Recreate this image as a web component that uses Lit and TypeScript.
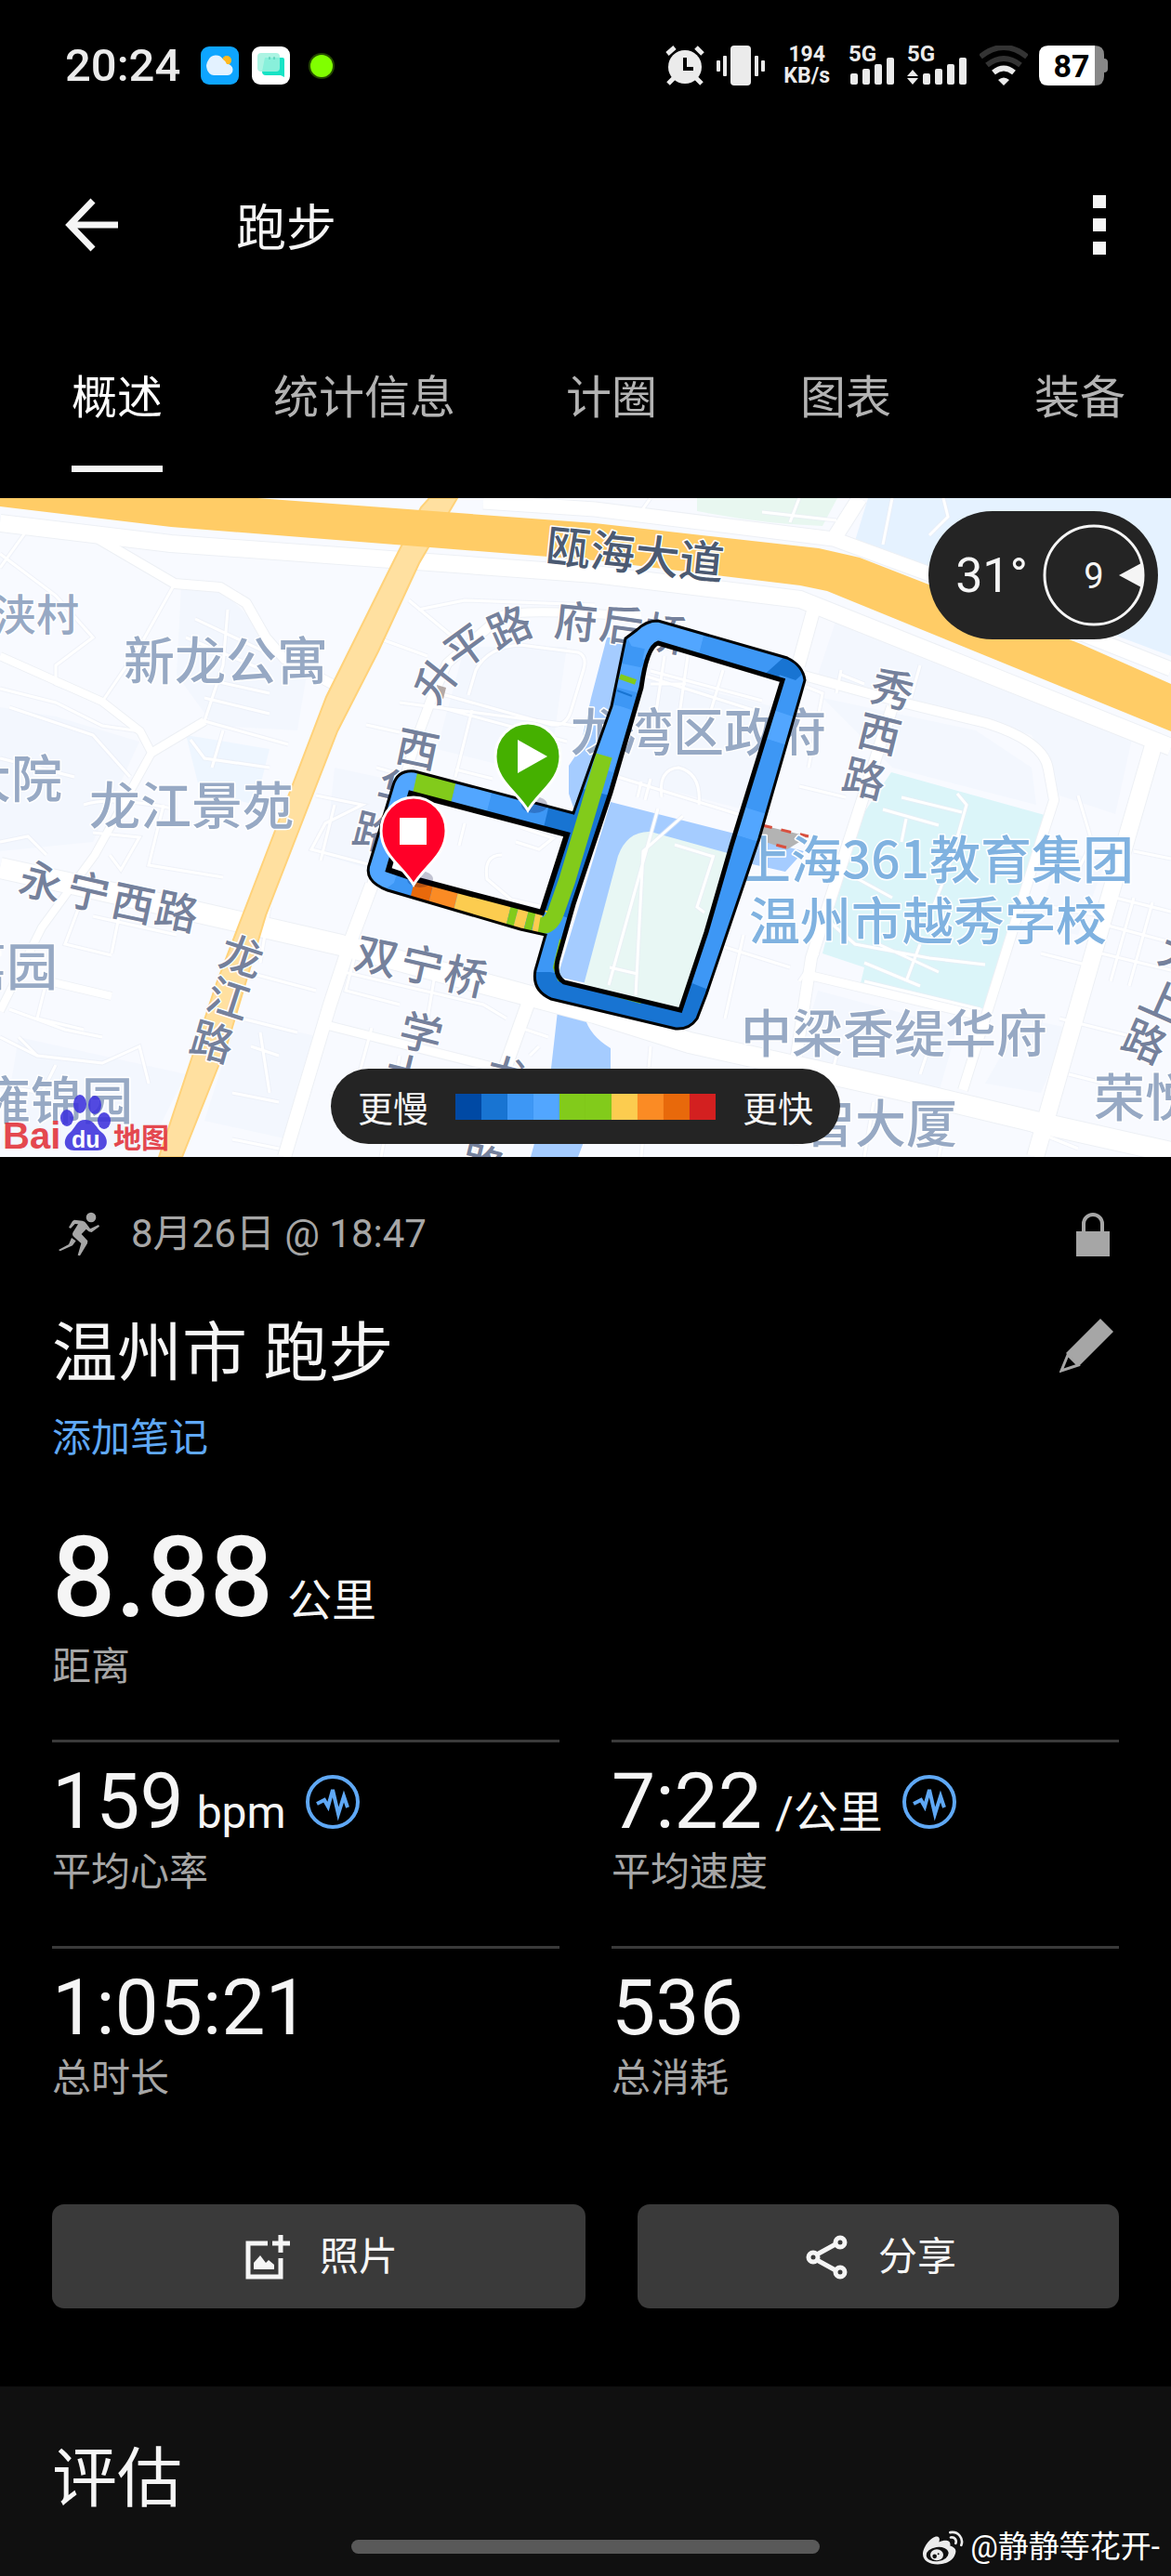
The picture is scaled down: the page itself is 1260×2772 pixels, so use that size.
import {LitElement, html, svg, css} from 'lit';
import {customElement, property, state} from 'lit/decorators.js';
import {classMap} from 'lit/directives/class-map.js';

const SLOWEST = '#0049a4';
const SLOW = '#1874d2';
const MID = '#3d97f5';
const LIGHT = '#52a6ff';
const GREEN = '#82cb1b';
const YELLOW = '#fccc4f';
const ORANGE = '#fb8b24';
const RED_ORANGE = '#e8690b';
const FASTEST = '#d32020';

const PACE_SCALE = [SLOWEST, SLOW, MID, LIGHT, GREEN, GREEN, YELLOW, ORANGE, RED_ORANGE, FASTEST];

// [path, width]
const ROADS: [string, number][] = [
    ['M0,27 L184,49 L640,82 L861,109 L1260,268', 18],
    ['M520,4 L640,12 L897,44 L1028,92 L1260,184', 15],
    ['M897,44 L925,0', 16],
    ['M106,44 L188,92 L237,96 L265,113 L286,150 L306,173 L359,201', 10],
    ['M0,552 L45,462 L102,384 L163,274 L151,251 L110,219 L0,170', 8],
    ['M163,274 L220,240', 9],
    ['M0,398 L82,416 L245,453 L367,481 L571,536 L640,554 L742,586 L971,637 L1126,674 L1260,704', 22],
    ['M400,416 L379,472 L355,545 L306,709', 14],
    ['M539,127 L481,178 L465,214 L448,260 L400,416', 10],
    ['M539,127 Q560,118 690,128', 9],
    ['M355,568 L530,612', 9],
    ['M571,536 L543,614 L518,709', 14],
    ['M876,118 L859,180', 14],
    ['M865,191 L967,219 L1061,242 Q1124,262 1128,292 L1134,325 L1118,375 L1036,637', 10],
    ['M1244,256 L1187,453 L1114,709', 18],
    ['M960,225 L873,495 L857,600', 12],
    ['M873,514 L1050,556', 9],
    ['M48,519 L120,536', 8],
];

const LANES = [
    'M0,60 L60,105 L100,150 L60,180 L60,200 L110,219',
    'M188,92 L150,160 L110,219', 'M28,36 L0,75',
    'M210,130 L282,164 M200,150 L276,182 M222,195 L290,210 M220,215 L290,232 M245,120 L240,180 L220,240',
    'M0,205 L60,220 L110,245 L151,251 M10,225 L100,255 L140,300 M0,280 L80,300',
    'M220,240 L310,265 M205,260 L220,280 L290,290 M240,250 L228,290',
    'M90,330 Q120,320 190,335 M100,360 L150,365 L130,400 L118,384 M176,330 L160,395 L240,408',
    'M340,320 L390,330 L350,350 L335,378 L400,395 M360,330 L345,390',
    'M0,370 L30,364 L50,384 M85,440 L70,480 L120,492 M100,450 L190,470 M130,440 L120,490',
    'M10,550 L70,572 L110,580 M50,520 L40,560 L90,572 M0,580 L40,600 L110,608 L150,590 L160,630',
    'M60,610 L45,640 L0,632 M40,600 L20,580',
    'M275,460 L330,470 M265,510 L340,530 M290,440 L280,500 M370,510 L520,545 L545,560',
    'M260,560 L320,575 M280,575 L290,640 M250,640 L300,650 M270,590 L300,600 M250,690 L300,700',
    'M385,480 L372,530 L430,545 M390,500 L410,490 M470,500 L460,560',
    'M440,110 L500,160 M450,120 L500,110 L640,115 M405,150 L460,170 M405,290 L440,300',
    'M504,212 L512,185 Q525,160 560,158 L622,166 Q632,170 628,184 L614,230 Q608,248 590,243 L465,208',
    'M430,220 L620,245 M462,222 L610,262 M508,228 L490,300 M394,244 L430,252',
    'M490,292 L530,302 M560,354 L595,366 L580,378 L555,370 M540,384 Q520,384 524,410 L550,432 L585,440 M500,350 L494,374',
    'M700,200 L738,200 M700,186 L820,218 M690,190 L810,228 M740,170 L730,240 M778,185 L760,245 M715,170 L706,230',
    'M665,300 L800,342 M712,322 Q708,292 730,290 Q755,296 752,330 M690,305 L686,322 M700,302 L694,325',
    'M708,334 L655,524 M735,342 L692,380 L684,535 M726,373 L768,386 M768,384 L750,440 L758,446 M656,505 L686,512',
    'M860,200 L885,210 L870,290 M905,185 L900,210 M930,200 L905,190 M860,310 L910,322 M990,180 L980,215',
    'M970,322 L1035,338 M950,335 L1010,352 M975,345 L970,370 M1030,318 L1040,330 L1020,400 L1000,450',
    'M905,400 L960,430 M880,445 L920,480 L1000,495 L1060,502 M930,500 L990,525 M945,480 L1010,510',
    'M930,520 L1055,550 M990,480 L975,520 M880,490 L860,520 M800,470 L780,560 M770,480 L850,505',
    'M1160,320 L1175,370 L1160,400 M1130,440 L1190,450 M1120,490 L1180,505 M1220,380 L1260,388',
    'M1200,430 L1260,445 M1192,460 L1260,478 M1185,490 L1260,508 M1220,430 L1195,520 M1240,435 L1215,525',
    'M1140,560 L1220,580 M1150,620 L1230,640 M1000,590 L990,620 M900,600 L890,640 M660,650 L860,695',
    'M940,650 L930,709 M1020,660 L1010,709 M1060,660 L1160,700 M700,590 L690,709 M1120,560 L1110,600',
    'M820,15 L900,24 M860,0 L850,26 M960,0 L950,50 M1000,40 L1020,20 L1015,0 M700,0 L690,14',
    'M355,640 L500,670 M400,570 L370,680 M430,600 L410,709 M560,570 L590,580 M570,600 L580,590',
];

const BLOCKS = [
    'M195,95 L240,100 L270,130 L330,190 L320,250 L230,245 L190,190 Z',
    'M0,225 L60,235 L150,262 L100,370 L0,380 Z',
    'M360,290 L430,305 L400,400 L350,385 Z',
    'M20,580 L200,620 L160,700 L0,700 Z',
    'M255,560 L345,580 L310,690 L220,670 Z',
    'M885,215 L1050,250 L1110,290 L1115,330 L960,290 Z',
    'M1140,380 L1190,390 L1160,470 L1115,460 Z',
    'M880,530 L1030,570 L1010,640 L860,600 Z',
    'M1100,560 L1150,570 L1120,640 L1060,630 Z',
    'M500,160 L610,160 L590,300 L470,270 Z',
    'M690,190 L835,225 L800,335 L665,300 Z',
    'M900,130 L1220,250 L1200,340 L1140,320 L1110,255 L880,190 Z',
];

// [text, x, y, colour]
const PLACES: [string, number, number, string][] = [
    ['新龙公寓', 133, 195, '#97a9c4'],
    ['龙江景苑', 96, 351, '#97a9c4'],
    ['大院', -43, 322, '#97a9c4'],
    ['嘉园', -48, 524, '#97a9c4'],
    ['雍锦园', -22, 668, '#97a9c4'],
    ['龙湾区政府', 614, 272, '#97a9c4'],
    ['上海361教育集团', 796, 409, '#80b2e0'],
    ['温州市越秀学校', 806, 475, '#80b2e0'],
    ['中梁香缇华府', 797, 596, '#97a9c4'],
    ['荣悦府', 1177, 665, '#97a9c4'],
    ['智大厦', 865, 693, '#97a9c4'],
];

// road names run along the road, one character at a time: [char, x, y, angle]
const STREETS: [string, number, number, number][] = [
    ['升', 467, 194, -52], ['平', 500, 157, -36], ['路', 547, 136, -24],
    ['府', 620, 130, 6], ['后', 669, 134, 8], ['桥', 716, 143, 10],
    ['西', 450, 267, 12], ['华', 430, 312, 14], ['路', 404, 357, 14],
    ['永', 45, 410, 14], ['宁', 96, 421, 13], ['西', 144, 433, 12], ['路', 191, 442, 12],
    ['龙', 261, 490, 18], ['江', 247, 536, 18], ['路', 229, 582, 16],
    ['双', 406, 490, 12], ['宁', 455, 500, 13], ['桥', 502, 512, 13],
    ['学', 454, 573, 14], ['士', 438, 618, 14], ['龙', 547, 620, 14], ['路', 520, 714, 14],
    ['秀', 961, 203, 14], ['西', 947, 251, 14], ['路', 931, 299, 14],
    ['大', 1272, 488, 22], ['上', 1252, 538, 24], ['路', 1233, 582, 24],
];

const OUTER = 'M673,151 L685,142 Q695,132 708,132 L847,172 Q864,180 866,196 L862,210 L817,366 L760,534 L750,560 Q742,572 727,571 L593,539 Q572,530 576,508 L587,470 L560,464 L417,422 Q390,412 398,392 L423,309 Q428,292 446,294 L617,339 L658,224 Z';
const INNER_SMALL = 'M442,318 L610,362 L583,446 L450,411 L418,400 Z';
const INNER_BIG = 'M708,156 L842,196 L787,374 L760,467 L732,551 L607,521 Q596,514 600,497 L617,437 L657,317 L690,204 Q696,160 708,156 Z';

// [path, colour, width]
const TRACK: [string, string, number][] = [
    ['M443,306 L488,317', GREEN, 34],
    ['M488,317 L527,326', LIGHT, 34],
    ['M527,326 L588,342', MID, 34],
    ['M588,342 L630,352', SLOW, 34],
    ['M448,300 Q430,296 426,315 L408,392 L424,414', LIGHT, 40],
    ['M424,414 L444,420', MID, 34],
    ['M444,420 L464,425', RED_ORANGE, 34],
    ['M464,425 L491,432', ORANGE, 34],
    ['M491,432 L548,446', YELLOW, 34],
    ['M548,446 L556,448', GREEN, 34],
    ['M556,448 L567,451', YELLOW, 34],
    ['M567,451 L575,453', GREEN, 34],
    ['M575,453 L590,456', YELLOW, 30],
    ['M680,160 L708,145 L755,157', LIGHT, 36],
    ['M755,157 L842,180', MID, 36],
    ['M838,176 L856,196', SLOW, 36],
    ['M856,196 L844,232', MID, 36],
    ['M844,232 L834,262', LIGHT, 36],
    ['M834,262 L812,336', MID, 36],
    ['M812,336 L803,366', LIGHT, 36],
    ['M803,366 L752,525', MID, 40],
    ['M752,525 L738,560 L592,528 L592,510', SLOW, 44],
    ['M592,510 L606,450', MID, 44],
    ['M606,450 L640,350 L648,318', SLOW, 50],
    ['M653,318 L690,204', MID, 40],
    ['M645,290 L668,224', LIGHT, 30],
    ['M668,224 L674,196', MID, 34],
    ['M673,206 L680,178', LIGHT, 28],
    ['M679,180 L683,160', MID, 22],
    ['M667,192 L684,198', GREEN, 6],
    ['M664,207 L680,213', SLOW, 2],
    ['M650,277 L630,345 L610,412 L598,446 Q592,462 580,460', GREEN, 18],
    ['M690,205 L655,318 L620,430', SLOW, 2],
    ['M604,475 L597,505 L602,518 L690,542', GREEN, 4],
];

@customElement('activity-map')
class ActivityMap extends LitElement {
    static styles = css`
:host {
display: block;
position: relative;
overflow: hidden;
}
.map {
display: block;
width: 100%;
height: auto;
}
.map text {
font-family: "Noto Sans CJK SC", sans-serif;
font-weight: 500;
paint-order: stroke;
stroke: #fff;
stroke-width: 3px;
stroke-linejoin: round;
}
.place {
font-size: 55px;
}
.village {
font-size: 46px;
fill: #97a9c4;
}
.street {
font-size: 46px;
fill: #75819c;
text-anchor: middle;
dominant-baseline: central;
}
.avenue {
font-size: 48px;
fill: #4b5a72;
}
.map .logo {
font-weight: 700;
stroke: none;
}
.map .latin {
font-family: "Liberation Sans", sans-serif;
}
.bai {
font-size: 40px;
}
.du {
font-size: 25px;
}
.ditu {
font-size: 30px;
}
.weather {
position: absolute;
top: 14px;
right: 14px;
display: flex;
align-items: center;
gap: 16px;
padding: 14px 14px 14px 29px;
border-radius: 70px;
background: #242424;
color: #f5f5f5;
font-size: 52px;
}
.weather svg {
display: block;
width: 110px;
height: 110px;
}
.wind {
font-size: 38px;
fill: #f5f5f5;
text-anchor: middle;
}
.legend {
position: absolute;
bottom: 14px;
left: 50%;
transform: translateX(-50%);
display: flex;
align-items: center;
gap: 29px;
padding: 0 29px;
height: 81px;
border-radius: 41px;
background: #242424;
color: #f5f5f5;
font-size: 38px;
white-space: nowrap;
}
.scale {
display: flex;
}
.step {
width: 28px;
height: 28px;
}
`;

    pin(x: number, y: number, fill: string, mark: unknown) {
        return svg`
<ellipse cx=${x + 7} cy=${y + 52} rx="14" ry="9" fill="#003" opacity=".22"></ellipse>
<g transform="translate(${x} ${y})">
<path d="M0,58 C-12,38 -35,26 -35,0 A35,36 0 0 1 35,0 C35,26 12,38 0,58 Z" fill=${fill} stroke="#fff" stroke-width="3"></path>
${mark}
</g>`;
    }

    base() {
        return svg`
<rect width="1260" height="709" fill="#f8faff"></rect>
${BLOCKS.map(d => svg`<path d=${d} fill="#f3f7fe"></path>`)}
<path d="M200,255 L290,270 L275,330 L215,315 Z" fill="#eef6ff"></path>
<path d="M750,0 L901,0 L885,30 Q820,28 750,14 Z" fill="#e8f7f0"></path>
<path d="M934,0 L1260,0 L1260,170 L1040,88 L920,46 Z" fill="#e5f2ff"></path>
<path d="M653,150 L682,150 L660,240 L618,336 L612,318 L612,288 L624,270 L636,215 Z" fill="#a5ccff"></path>
<path d="M657,327 L700,338 L865,380 L845,402 L783,388 L698,362 L640,524 L600,515 Z" fill="#a5ccff"></path>
<path d="M628,524 L665,385 Q675,358 700,359 L783,382 L770,460 L730,552 Z" fill="#e8f7f4"></path>
<path d="M600,552 L629,558 Q634,578 657,592 L657,616 L622,709 L571,709 L590,640 Z" fill="#a5ccff"></path>
<path d="M959,295 L1124,341 L1118,375 L1061,550 L926,522 L930,505 L885,490 L906,407 L930,338 Z" fill="#dbf5f9"></path>
${LANES.map(d => svg`<path d=${d} fill="none" stroke="#e9edf5" stroke-opacity=".6" stroke-width="5"></path>`)}
${ROADS.map(([d, w]) => svg`<path d=${d} fill="none" stroke="#edf0f5" stroke-width=${w + 2} stroke-linejoin="round"></path>`)}
${LANES.map(d => svg`<path d=${d} fill="none" stroke="#fff" stroke-width="3"></path>`)}
${ROADS.map(([d, w]) => svg`<path d=${d} fill="none" stroke="#fff" stroke-width=${w} stroke-linejoin="round"></path>`)}
<path d="M462,0 L492,0 L451,70 L407,165 L363,251 L286,449 L245,586 L196,709 L171,709 L233,522 L286,384 L351,214 L424,67 L453,10 Z" fill="#ffe0a0" stroke="#ffd27a" stroke-width="2"></path>
<path d="M0,0 L277,0 L640,27 L881,54 L925,64 L1163,157 L1260,200 L1260,251 L890,100 L861,94 L640,67 L184,31 L0,9 Z" fill="#ffcc66"></path>
<path d="M470,201 L480,204 L477,216 L472,214 Z" fill="#b3a9a6"></path>
<path d="M820,352 L870,364 L847,378 L815,367 Z" fill="#b3b3b3"></path>
<path d="M820,352 L870,364 M815,368 L850,377" stroke="#d8503f" stroke-width="3" stroke-dasharray="11 10"></path>`;
    }

    labels() {
        return svg`
<text class="village" x="-7" y="142">浃村</text>
${PLACES.map(([t, x, y, c]) => svg`<text class="place" x=${x} y=${y} fill=${c}>${t}</text>`)}
${STREETS.map(([t, x, y, a]) => svg`<text class="street" transform="translate(${x} ${y}) rotate(${a})">${t}</text>`)}
<text class="avenue" transform="translate(586 68) rotate(6)">瓯海大道</text>`;
    }

    route() {
        return svg`
<clipPath id="track"><path d="${OUTER} ${INNER_SMALL} ${INNER_BIG}" clip-rule="evenodd"></path></clipPath>
<g fill="none" clip-path="url(#track)">
<rect width="1260" height="709" fill=${MID}></rect>
${TRACK.map(([d, c, w]) => svg`<path d=${d} stroke=${c} stroke-width=${w}></path>`)}
</g>
<path d=${OUTER} fill="none" stroke="#000" stroke-width="3"></path>
<path d=${INNER_SMALL} fill="none" stroke="#000" stroke-width="6"></path>
<path d=${INNER_BIG} fill="none" stroke="#000" stroke-width="5"></path>
${this.pin(568, 278, '#45b000', svg`<path d="M-11,-18 L21,0 L-11,18 Z" fill="#fff"></path>`)}
${this.pin(445, 358, '#ff0028', svg`<rect x="-15" y="-14" width="29" height="29" fill="#fff"></rect>`)}`;
    }

    baidu() {
        return svg`
<g opacity=".88">
<text class="logo latin bai" x="3" y="700" fill="#e23038">Bai</text>
<g fill="#3c32dc">
<ellipse cx="72" cy="667" rx="7" ry="9"></ellipse>
<ellipse cx="86" cy="652" rx="7" ry="10"></ellipse>
<ellipse cx="102" cy="653" rx="7" ry="10"></ellipse>
<ellipse cx="112" cy="670" rx="7" ry="9"></ellipse>
<path d="M92,669 C102,669 103,678 110,683 C118,690 116,702 105,702 C98,702 87,702 80,702 C68,702 67,690 75,683 C82,677 82,669 92,669 Z"></path>
</g>
<text class="logo latin du" x="77" y="699" fill="#fff">du</text>
<text class="logo ditu" x="122" y="699" fill="#e23038">地图</text>
</g>`;
    }

    render() {
        return html`
<svg class="map" viewBox="0 0 1260 709" role="img" aria-label="路线地图">
${this.base()}
${this.labels()}
${this.route()}
${this.baidu()}
</svg>
<div class="weather">
<span>31°</span>
<svg viewBox="0 0 110 110">
<circle cx="55" cy="55" r="53" fill="none" stroke="#f5f5f5" stroke-width="3"></circle>
<path d="M82,55 L106,42 Q110,55 106,68 Z" fill="#f5f5f5"></path>
<text class="wind" x="55" y="69">9</text>
</svg>
</div>
<div class="legend">
<span>更慢</span>
<div class="scale">${PACE_SCALE.map(c => html`<div class="step" style="background: ${c}"></div>`)}</div>
<span>更快</span>
</div>`;
    }
}

@customElement('stat-cell')
class StatCell extends LitElement {
    static styles = css`
:host {
display: block;
border-top: 3px solid #3a3a3a;
padding: 22px 0 51px;
}
.value {
display: flex;
align-items: baseline;
gap: 14px;
font-size: 84px;
line-height: 84px;
color: #f5f5f5;
}
.unit {
font-size: 48px;
line-height: 56px;
}
.pulse {
align-self: center;
display: block;
width: 60px;
height: 60px;
margin: 0 0 0 6px;
padding: 0;
border: 0;
background: none;
}
.pulse svg {
display: block;
}
.label {
margin-top: 6px;
font-size: 42px;
line-height: 56px;
color: #a6a6a6;
}
`;

    @property() value = '';
    @property() unit = '';
    @property() label = '';
    @property({type: Boolean}) chart = false;

    render() {
        return html`
<div class="value">
<span>${this.value}</span>
${this.unit ? html`<span class="unit">${this.unit}</span>` : ''}
${this.chart ? html`
<button class="pulse" aria-label="图表">
<svg viewBox="0 0 60 60" width="60" height="60" fill="none" stroke="#5fa8f5">
<circle cx="30" cy="30" r="27" stroke-width="4"></circle>
<path d="M13,32 L21,28 L25,35 L30,17 L36,43 L42,24 L46,36" stroke-width="4"></path>
</svg>
</button>` : ''}
</div>
<div class="label">${this.label}</div>`;
    }
}

@customElement('app-root')
class AppRoot extends LitElement {
    static styles = css`
:host {
display: flex;
flex-direction: column;
position: relative;
min-height: 100vh;
overflow: hidden;
background: #000;
color: #f5f5f5;
font-family: Roboto, "Noto Sans CJK SC", sans-serif;
}
button {
margin: 0;
padding: 0;
border: 0;
background: none;
color: inherit;
font-family: inherit;
}
svg {
display: block;
flex: none;
}
.status {
display: flex;
align-items: center;
height: 140px;
padding: 0 67px 0 70px;
gap: 14px;
color: #ebebeb;
}
.clock {
font-size: 49px;
font-weight: 500;
margin-right: 8px;
}
.right {
display: flex;
align-items: center;
gap: 12px;
margin-left: auto;
}
.speed {
font-size: 23px;
line-height: 23px;
font-weight: 700;
text-align: center;
padding: 0 8px;
}
.net {
font-size: 24px;
font-weight: 700;
fill: #ebebeb;
}
.level {
font-size: 34px;
font-weight: 700;
fill: #000;
text-anchor: middle;
}
.bar {
display: flex;
align-items: center;
height: 204px;
padding: 0 70px;
}
.bar h1 {
flex: 1;
margin: 0 0 0 127px;
font-family: "Noto Sans CJK SC", sans-serif;
font-size: 54px;
line-height: 80px;
font-weight: 400;
}
.tabs {
display: flex;
overflow: hidden;
}
.tab {
flex: none;
min-width: 20%;
padding: 51px 42px 28px;
font-size: 49px;
line-height: 68px;
color: #b3b3b3;
}
.tab span {
display: inline-block;
padding-bottom: 38px;
border-bottom: 7px solid transparent;
}
.tab.active {
color: #fff;
}
.tab.active span {
border-color: #f5f5f5;
}
.summary {
padding: 59px 56px 84px;
}
.row {
display: flex;
align-items: center;
}
.row button {
display: flex;
justify-content: center;
margin-left: auto;
}
.meta {
height: 48px;
padding-left: 7px;
gap: 34px;
font-size: 42px;
line-height: 48px;
color: #a6a6a6;
}
.lock {
width: 56px;
}
.edit {
width: 70px;
}
.name {
margin-top: 62px;
height: 80px;
}
h2 {
margin: 0;
padding-top: 6px;
font-size: 70px;
line-height: 80px;
font-weight: 400;
}
.note {
display: table;
margin-top: 26px;
font-size: 42px;
line-height: 56px;
color: #5fa8f5;
text-decoration: none;
}
.distance {
display: flex;
align-items: baseline;
gap: 15px;
margin-top: 62px;
font-size: 120px;
line-height: 120px;
font-weight: 500;
}
.unit {
font-size: 48px;
line-height: 56px;
font-weight: 400;
}
.caption {
margin-top: 8px;
font-size: 42px;
line-height: 56px;
color: #a6a6a6;
}
.stats {
display: grid;
grid-template-columns: 1fr 1fr;
column-gap: 56px;
margin-top: 50px;
}
.actions {
display: grid;
grid-template-columns: 41fr 37fr;
column-gap: 56px;
margin-top: 56px;
}
.action {
display: flex;
align-items: center;
justify-content: center;
gap: 32px;
height: 112px;
padding: 2px 0 0 6px;
border-radius: 13px;
background: #3a3a3a;
color: #f5f5f5;
font-size: 42px;
line-height: 56px;
}
.review {
flex: 1;
padding: 54px 56px 60px;
background: #101010;
}
.home {
position: absolute;
bottom: 24px;
left: 30%;
right: 30%;
height: 15px;
border-radius: 8px;
background: #595959;
}
.mark {
position: absolute;
right: 12px;
bottom: 11px;
display: flex;
align-items: center;
gap: 7px;
font-size: 33px;
line-height: 40px;
color: #fff;
}
`;

    @state() tab = 0;

    tabNames = ['概述', '统计信息', '计圈', '图表', '装备'];

    signal(arrows: boolean) {
        const x = arrows ? 17 : 2;
        return html`
<svg width=${arrows ? 66 : 51} height="54" viewBox="0 -5 ${arrows ? 66 : 51} 54" fill="#ebebeb">
<text class="net" x="0" y="18">5G</text>
${arrows ? svg`<path d="M6,27 L12,34 H0 Z M6,43 L12,36 H0 Z"></path>` : ''}
${[12, 17, 22, 29].map((h, i) => svg`<rect x=${x + i * 13} y=${43 - h} width="8" height=${h} rx="2"></rect>`)}
</svg>`;
    }

    statusBar() {
        return html`
<div class="status">
<span class="clock">20:24</span>
<svg width="41" height="41" viewBox="0 0 41 41">
<rect width="41" height="41" rx="9" fill="#0ea5ff"></rect>
<circle cx="28" cy="15" r="5" fill="#ffb81f"></circle>
<path d="M14,31 A9,10 0 0 1 8,15 A9,9 0 0 1 24,14 A9,9 0 0 1 28,19 A6,6 0 0 1 29,31 Z" fill="#e3f2ff"></path>
</svg>
<svg width="41" height="41" viewBox="0 0 41 41">
<rect width="41" height="41" rx="9" fill="#fff"></rect>
<path d="M14,12 H33 Q35,12 35,14 V33 L31,31 H15 Q11,31 11,27 Z" fill="#17e3c5"></path>
<rect x="6" y="7" width="24" height="20" rx="4" fill="#9ef2de" opacity=".85"></rect>
<path d="M19,11 V14 M24,11 V14" stroke="#3fbfa8" stroke-width="1"></path>
</svg>
<svg width="41" height="41" viewBox="0 0 41 41">
<circle cx="20" cy="21" r="14" fill="#3c7a00" opacity=".6"></circle>
<circle cx="20" cy="21" r="12" fill="#80ff00"></circle>
</svg>
<div class="right">
<svg width="43" height="43" viewBox="0 0 43 43">
<circle cx="21" cy="23" r="18" fill="#ebebeb"></circle>
<path d="M9,35 L3,41 M33,35 L39,41 M2,9 L10,2 M40,9 L33,2" stroke="#ebebeb" stroke-width="5"></path>
<path d="M21,13 V25 H30" stroke="#000" stroke-width="4" fill="none"></path>
</svg>
<svg width="52" height="43" viewBox="0 0 52 43" fill="#ebebeb">
<rect x="15" y="0" width="22" height="43" rx="4"></rect>
<rect x="7" y="11" width="4" height="22" rx="1"></rect>
<rect x="41" y="11" width="4" height="22" rx="1"></rect>
<rect x="0" y="16" width="4" height="12" rx="1"></rect>
<rect x="48" y="16" width="4" height="12" rx="1"></rect>
</svg>
<div class="speed">194<br>KB/s</div>
${this.signal(false)}
${this.signal(true)}
<svg width="52" height="43" viewBox="0 0 52 43" fill="none">
<path d="M1,12 Q26,-8 51,12" stroke="#333" stroke-width="6"></path>
<path d="M8,21 Q26,7 44,21" stroke="#333" stroke-width="6"></path>
<path d="M15,29 Q26,20 37,29" stroke="#ebebeb" stroke-width="6"></path>
<path d="M20,37 Q26,32 32,37 L26,43 Z" fill="#ebebeb"></path>
</svg>
<svg width="75" height="43" viewBox="0 0 75 43">
<path d="M60,0 Q70,0 70,10 V14 Q74,14 74,18 V25 Q74,29 70,29 V33 Q70,43 60,43 Z" fill="#888"></path>
<path d="M10,0 H60 V43 H10 Q0,43 0,33 V10 Q0,0 10,0 Z" fill="#fff"></path>
<text class="level" x="35" y="34">87</text>
</svg>
</div>
</div>`;
    }

    appBar() {
        return html`
<div class="bar">
<button aria-label="返回">
<svg width="57" height="58" viewBox="0 0 57 58" fill="none" stroke="#f5f5f5" stroke-width="7">
<path d="M30,3 L5,29 L30,55 M5,29 H57"></path>
</svg>
</button>
<h1>跑步</h1>
<button aria-label="更多">
<svg width="14" height="64" viewBox="0 0 14 64" fill="#f5f5f5">
<rect width="14" height="14"></rect>
<rect y="25" width="14" height="14"></rect>
<rect y="50" width="14" height="14"></rect>
</svg>
</button>
</div>
<div class="tabs" role="tablist">
${this.tabNames.map((name, i) => html`
<button role="tab" class=${classMap({tab: true, active: i === this.tab})} @click=${() => this.tab = i}><span>${name}</span></button>`)}
</div>`;
    }

    summary() {
        return html`
<div class="summary">
<div class="row meta">
<svg width="44" height="48" viewBox="39 44 132 144" fill="#a6a6a6">
<circle cx="144" cy="62" r="16"></circle>
<path d="M90,70 L116,73 Q124,74 130,84 L141,99 L168,86 L171,91 L146,110 L137,108 L128,100 L113,116 L133,138 L132,146 L108,186 L101,184 L112,146 L88,124 Q80,116 88,106 L102,84 L92,83 L78,98 L72,94 L84,74 Z"></path>
<path d="M81,128 L95,138 L84,153 L44,171 L39,167 L72,149 Z"></path>
</svg>
<span>8月26日 @ 18:47</span>
<button class="lock" aria-label="隐私">
<svg width="36" height="48" viewBox="0 0 36 48">
<path d="M8,24 V13 A10,10 0 0 1 28,13 V24" fill="none" stroke="#a6a6a6" stroke-width="4"></path>
<rect y="21" width="36" height="27" fill="#a6a6a6"></rect>
</svg>
</button>
</div>
<div class="row name">
<h2>温州市 跑步</h2>
<button class="edit" aria-label="编辑">
<svg width="58" height="70" viewBox="0 0 58 70">
<path d="M44,0 L58,14 L21,51 L7,37 Z" fill="#a6a6a6"></path>
<path d="M9,39 L2,56 L20,50 Z" fill="none" stroke="#a6a6a6" stroke-width="3"></path>
</svg>
</button>
</div>
<a class="note" href="#note">添加笔记</a>
<div class="distance"><span>8.88</span><span class="unit">公里</span></div>
<div class="caption">距离</div>
<div class="stats">
<stat-cell value="159" unit="bpm" label="平均心率" chart></stat-cell>
<stat-cell value="7:22" unit="/公里" label="平均速度" chart></stat-cell>
<stat-cell value="1:05:21" label="总时长"></stat-cell>
<stat-cell value="536" label="总消耗"></stat-cell>
</div>
<div class="actions">
<button class="action">
<svg width="48" height="48" viewBox="0 0 48 48">
<path d="M24,9 H3 V45 H38 V25" fill="none" stroke="#f5f5f5" stroke-width="5"></path>
<path d="M38,0 V19 M29,9 H48" stroke="#f5f5f5" stroke-width="5"></path>
<path d="M9,37 V30 L16,22 L22,30 L25,27 L31,32 V37 Z" fill="#f5f5f5"></path>
</svg>
<span>照片</span>
</button>
<button class="action">
<svg width="46" height="48" viewBox="0 0 46 48" fill="none" stroke="#f5f5f5" stroke-width="5">
<path d="M12,21 L32,10 M12,27 L32,38"></path>
<circle cx="8" cy="24" r="5"></circle>
<circle cx="37" cy="8" r="5"></circle>
<circle cx="37" cy="40" r="5"></circle>
</svg>
<span>分享</span>
</button>
</div>
</div>`;
    }

    render() {
        return html`
${this.statusBar()}
${this.appBar()}
<activity-map></activity-map>
${this.summary()}
<div class="review"><h2>评估</h2></div>
<div class="home"></div>
<div class="mark">
<svg width="44" height="37" viewBox="0 0 132 108">
<path d="M0,75 C0,50 28,18 45,18 C55,18 55,28 52,36 C70,28 92,28 88,48 C110,55 108,68 103,78 C95,98 70,108 48,108 C20,108 0,95 0,75 Z" fill="#ebebeb"></path>
<ellipse cx="47" cy="75" rx="36" ry="23" fill="#101010" transform="rotate(-8 47 75)"></ellipse>
<ellipse cx="45" cy="77" rx="21" ry="18" fill="#ebebeb"></ellipse>
<circle cx="38" cy="82" r="7" fill="#101010"></circle>
<circle cx="50" cy="74" r="3" fill="#101010"></circle>
<path d="M88,5 C115,0 132,25 124,46 M90,21 C103,19 110,30 106,40" fill="none" stroke="#ebebeb" stroke-width="8" stroke-linecap="round"></path>
</svg>
<span>@静静等花开-</span>
</div>`;
    }
}
